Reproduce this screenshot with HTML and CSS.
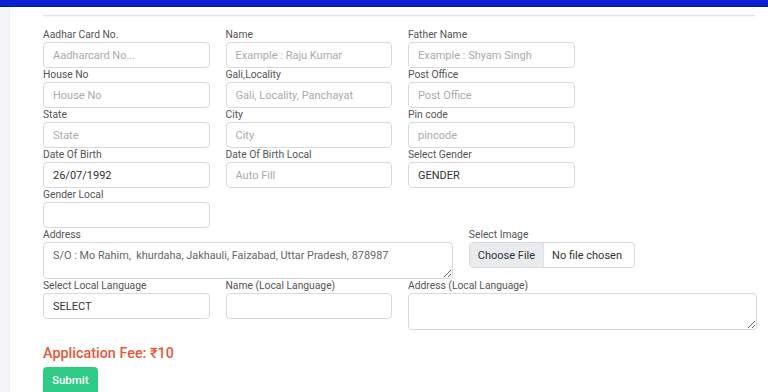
FILE: index.html
```html
<!DOCTYPE html>
<html lang="en">
<head>
  <meta charset="UTF-8" />
  <title>Application Form</title>
  <link rel="stylesheet" href="styles.css">
</head>
<body>

  <div class="topbar"></div>

  <div class="layout">
    <aside class="sidebar"></aside>

    <main class="panel">
      <hr class="divider">

      <form class="form-grid">
        <div class="field span-3">
          <label>Aadhar Card No.</label>
          <input type="text" placeholder="Aadharcard No...">
        </div>
        <div class="field span-3">
          <label>Name</label>
          <input type="text" placeholder="Example : Raju Kumar">
        </div>
        <div class="field span-3">
          <label>Father Name</label>
          <input type="text" placeholder="Example : Shyam Singh">
        </div>
        <div class="field span-3"></div>

        <div class="field span-3">
          <label>House No</label>
          <input type="text" placeholder="House No">
        </div>
        <div class="field span-3">
          <label>Gali,Locality</label>
          <input type="text" placeholder="Gali, Locality, Panchayat">
        </div>
        <div class="field span-3">
          <label>Post Office</label>
          <input type="text" placeholder="Post Office">
        </div>
        <div class="field span-3"></div>

        <div class="field span-3">
          <label>State</label>
          <input type="text" placeholder="State">
        </div>
        <div class="field span-3">
          <label>City</label>
          <input type="text" placeholder="City">
        </div>
        <div class="field span-3">
          <label>Pin code</label>
          <input type="text" placeholder="pincode">
        </div>
        <div class="field span-3"></div>

        <div class="field span-3">
          <label>Date Of Birth</label>
          <input type="text" value="26/07/1992">
        </div>
        <div class="field span-3">
          <label>Date Of Birth Local</label>
          <input type="text" placeholder="Auto Fill">
        </div>
        <div class="field span-3">
          <label>Select Gender</label>
          <select>
            <option>GENDER</option>
            <option>Male</option>
            <option>Female</option>
          </select>
        </div>
        <div class="field span-3"></div>

        <div class="field span-3">
          <label>Gender Local</label>
          <input type="text">
        </div>
        <div class="field span-9"></div>

        <div class="field span-7">
          <label>Address</label>
          <textarea class="address">S/O : Mo Rahim,  khurdaha, Jakhauli, Faizabad, Uttar Pradesh, 878987</textarea>
        </div>
        <div class="field span-3">
          <label>Select Image</label>
          <div class="file-input">
            <span class="file-btn">Choose File</span>
            <span class="file-name">No file chosen</span>
          </div>
        </div>
        <div class="field span-2"></div>

        <div class="field span-3">
          <label>Select Local Language</label>
          <select>
            <option>SELECT</option>
            <option>Hindi</option>
          </select>
        </div>
        <div class="field span-3">
          <label>Name (Local Language)</label>
          <input type="text">
        </div>
        <div class="field span-6">
          <label>Address (Local Language)</label>
          <textarea></textarea>
        </div>
      </form>

      <div class="fee">Application Fee: ₹10</div>
      <button class="submit-btn" type="button">Submit</button>
    </main>
  </div>

</body>
</html>
```

FILE: styles.css
```css
* {
  box-sizing: border-box;
  margin: 0;
  padding: 0;
}

html, body {
  height: 100%;
  font-family: Roboto, 'Liberation Sans', sans-serif;
  background: #ffffff;
  overflow: hidden;
}

.topbar {
  height: 7px;
  background-color: #0a22d2;
  border-bottom: 1px solid #0718a0;
}

.layout {
  display: flex;
  min-height: calc(100vh - 7px);
}

.sidebar {
  width: 10px;
  background: #f4f5f8;
  border-right: 1px solid #eceef2;
}

.panel {
  flex: 1;
  padding: 8px 11px 0 33px;
}

.divider {
  border: 0;
  border-top: 1px solid #e2e2e2;
  box-shadow: 0 1px 1px rgba(0,0,0,0.04);
  margin: 0 2px 12px 0;
}

.form-grid {
  display: grid;
  grid-template-columns: repeat(12, 1fr);
  column-gap: 16px;
}

.span-2 { grid-column: span 2; }
.span-3 { grid-column: span 3; }
.span-6 { grid-column: span 6; }
.span-7 { grid-column: span 7; }
.span-9 { grid-column: span 9; }

.field label {
  display: block;
  font-size: 10.3px;
  line-height: 14px;
  color: #555;
}

.field input,
.field select,
.field textarea {
  display: block;
  width: 100%;
  height: 26px;
  padding: 0 9px;
  font-family: inherit;
  font-size: 11px;
  color: #333;
  background: #fff;
  border: 1px solid #d9d9d9;
  border-radius: 4px;
  outline: none;
  appearance: none;
}

.field input::placeholder {
  color: #ababab;
}

.field textarea {
  height: 37px;
  padding: 6px 9px 4px;
  line-height: 14px;
  resize: vertical;
}

.field textarea.address {
  font-size: 10.9px;
  color: #666;
}

.file-input {
  display: flex;
  height: 26px;
  border: 1px solid #d9d9d9;
  border-radius: 4px;
  overflow: hidden;
  font-size: 11px;
  color: #333;
  white-space: nowrap;
}

.file-btn {
  display: flex;
  align-items: center;
  padding: 0 8px;
  background: #e9ecef;
  border-right: 1px solid #dcdfe3;
}

.file-name {
  display: flex;
  align-items: center;
  padding: 0 8px;
}

.fee {
  margin-top: 15px;
  font-size: 14.4px;
  font-weight: 500;
  color: #e8583b;
  line-height: 18px;
}

.submit-btn {
  margin-top: 4px;
  padding: 6px 9px 8px;
  font-family: inherit;
  font-size: 11.5px;
  font-weight: 500;
  color: #fff;
  background: #2ecb87;
  border: 0;
  border-radius: 4px;
  cursor: pointer;
}
```
